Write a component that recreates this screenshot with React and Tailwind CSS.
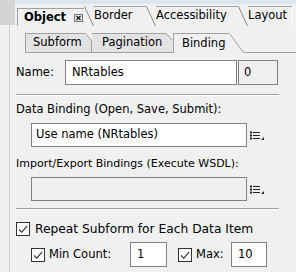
import React from "react";

function Check() {
  return (
    <div className="w-[14px] h-[14px] border border-[#333333] bg-white flex items-center justify-center shrink-0">
      <svg width="12" height="12" viewBox="0 0 12 12">
        <path d="M2 6.5 L4.8 9.2 L10.2 2.8" fill="none" stroke="#333" strokeWidth="1.1" />
      </svg>
    </div>
  );
}

function ListIcon() {
  return (
    <svg width="15" height="10" viewBox="0 0 15 10" className="shrink-0">
      <rect x="0" y="0.5" width="2" height="2" fill="#222" />
      <rect x="0" y="3.5" width="2" height="2" fill="#222" />
      <rect x="0" y="6.5" width="2" height="2" fill="#222" />
      <rect x="3" y="1" width="7" height="1" fill="#222" />
      <rect x="3" y="4" width="7" height="1" fill="#222" />
      <rect x="3" y="7" width="7" height="1" fill="#222" />
      <path d="M14 6 L14 9 L11 9 Z" fill="#222" />
    </svg>
  );
}

function Slant() {
  return (
    <svg width="10" height="20" viewBox="0 0 10 20" className="shrink-0">
      <path d="M0.5 0.5 L9.5 20" stroke="#8c8c8c" strokeWidth="1" fill="none" />
    </svg>
  );
}

function TopTab({ label, w }) {
  return (
    <div className={`h-[20px] flex ${w}`}>
      <Slant />
      <div className="flex-1 border-t border-[#a0a0a0] flex items-center pb-[1px]">{label}</div>
    </div>
  );
}

function Corner() {
  return (
    <svg width="7" height="8" viewBox="0 0 7 8" className="absolute -top-px -right-px">
      <path d="M0 0 L7 0 L7 8 Z" fill="#f0f0f0" />
      <path d="M0.5 0.5 L6.5 7.5" stroke="#a0a0a0" strokeWidth="1" fill="none" />
    </svg>
  );
}

export default function App() {
  return (
    <div className="w-[296px] h-[272px] flex bg-[#f0f0f0] font-['Tahoma','DejaVu_Sans',sans-serif] text-[11.5px] text-black overflow-hidden">
      <div className="w-[15px] flex flex-col shrink-0">
        <div className="h-[25px] bg-[#d4d4d4]" />
        <div className="flex-1 w-[10px] border-r border-[#d4d4d4]" />
      </div>
      <div className="flex-1 flex flex-col">
        <div className="h-[4px] bg-[#dfe5ec]" />
        <div className="h-[22px] flex items-end pl-[2px]">
          <div className="h-[18px] w-[67px] border-l border-t border-[#a0a0a0] flex items-center pl-[6px] font-bold">
            <span className="text-[11.5px]">Object</span>
            <svg width="9" height="8" viewBox="0 0 9 8" className="ml-[8px]">
              <rect x="0.5" y="0.5" width="8" height="7" fill="#e6e6e6" stroke="#777" />
              <path d="M2.5 2 L6.5 6 M6.5 2 L2.5 6" stroke="#111" strokeWidth="1.2" />
            </svg>
          </div>
          <TopTab label="Border" w="w-[62px]" />
          <TopTab label="Accessibility" w="w-[92px]" />
          <div className="h-[20px] flex w-[55px] border-r border-white">
            <Slant />
            <div className="flex-1 border-t border-[#a0a0a0] flex items-center pb-[1px]">Layout</div>
          </div>
        </div>

        <div className="mt-[7px] h-[20px] flex ml-[10px]">
          <div className="relative w-[67px] h-[20px] border border-[#a0a0a0] bg-[#e3e3e3] flex items-center pl-[7px]">
            Subform
            <Corner />
          </div>
          <div className="relative w-[81px] h-[20px] border-t border-b border-[#a0a0a0] bg-[#e3e3e3] flex items-center pl-[10px]">
            Pagination
            <svg width="7" height="8" viewBox="0 0 7 8" className="absolute -top-px right-0">
              <path d="M0 0 L7 0 L7 8 Z" fill="#f0f0f0" />
              <path d="M0.5 0.5 L6.5 7.5" stroke="#a0a0a0" strokeWidth="1" fill="none" />
            </svg>
          </div>
          <div className="w-[56px] h-[20px] border-l border-t border-[#a0a0a0] flex items-center pl-[8px]">Binding</div>
          <svg width="15" height="20" viewBox="0 0 15 20" className="shrink-0">
            <path d="M0.5 0.5 L14.5 19.5" stroke="#a0a0a0" strokeWidth="1" fill="none" />
          </svg>
          <div className="flex-1 border-b border-[#a0a0a0]" />
        </div>

        <div className="pl-[1px] flex flex-col">
          <div className="mt-[7px] flex items-center h-[25px]">
            <div className="w-[49px]">Name:</div>
            <div className="w-[172px] h-[25px] border border-[#828282] bg-white flex items-center pl-[6px]">NRtables</div>
            <div className="ml-[1px] w-[40px] h-[25px] border border-[#828282] bg-[#f0f0f0] flex items-center pl-[5px]">0</div>
          </div>

          <div className="mt-[9px] w-[263px] h-px bg-[#a0a0a0]" />
          <div className="w-[263px] h-px bg-white" />

          <div className="mt-[6px] h-[14px] leading-[14px]">Data Binding (Open, Save, Submit):</div>
          <div className="mt-[7px] flex items-center">
            <div className="ml-[15px] w-[216px] h-[24px] border border-[#828282] bg-white flex items-center pl-[4px]">Use name (NRtables)</div>
            <div className="ml-[3px] mt-[1px]"><ListIcon /></div>
          </div>

          <div className="mt-[10px] h-[14px] leading-[14px] text-[11px]">Import/Export Bindings (Execute WSDL):</div>
          <div className="mt-[6px] flex items-center">
            <div className="ml-[15px] w-[216px] h-[24px] border border-[#828282] bg-[#f0f0f0]" />
            <div className="ml-[3px] mt-[1px]"><ListIcon /></div>
          </div>

          <div className="mt-[7px] w-[263px] h-px bg-[#a0a0a0]" />
          <div className="w-[263px] h-px bg-white" />

          <div className="mt-[12px] h-[14px] flex items-center">
            <Check />
            <span className="ml-[5px] text-[12.25px]">Repeat Subform for Each Data Item</span>
          </div>

          <div className="mt-[6px] h-[25px] flex items-center">
            <div className="ml-[15px]"><Check /></div>
            <div className="ml-[4px] w-[81px]">Min Count:</div>
            <div className="w-[37px] h-[25px] border border-[#828282] bg-white flex items-center pl-[6px]">1</div>
            <div className="ml-[11px]"><Check /></div>
            <div className="ml-[4px] w-[35px]">Max:</div>
            <div className="w-[36px] h-[25px] border border-[#828282] bg-white flex items-center pl-[6px]">10</div>
          </div>
        </div>
      </div>
    </div>
  );
}
